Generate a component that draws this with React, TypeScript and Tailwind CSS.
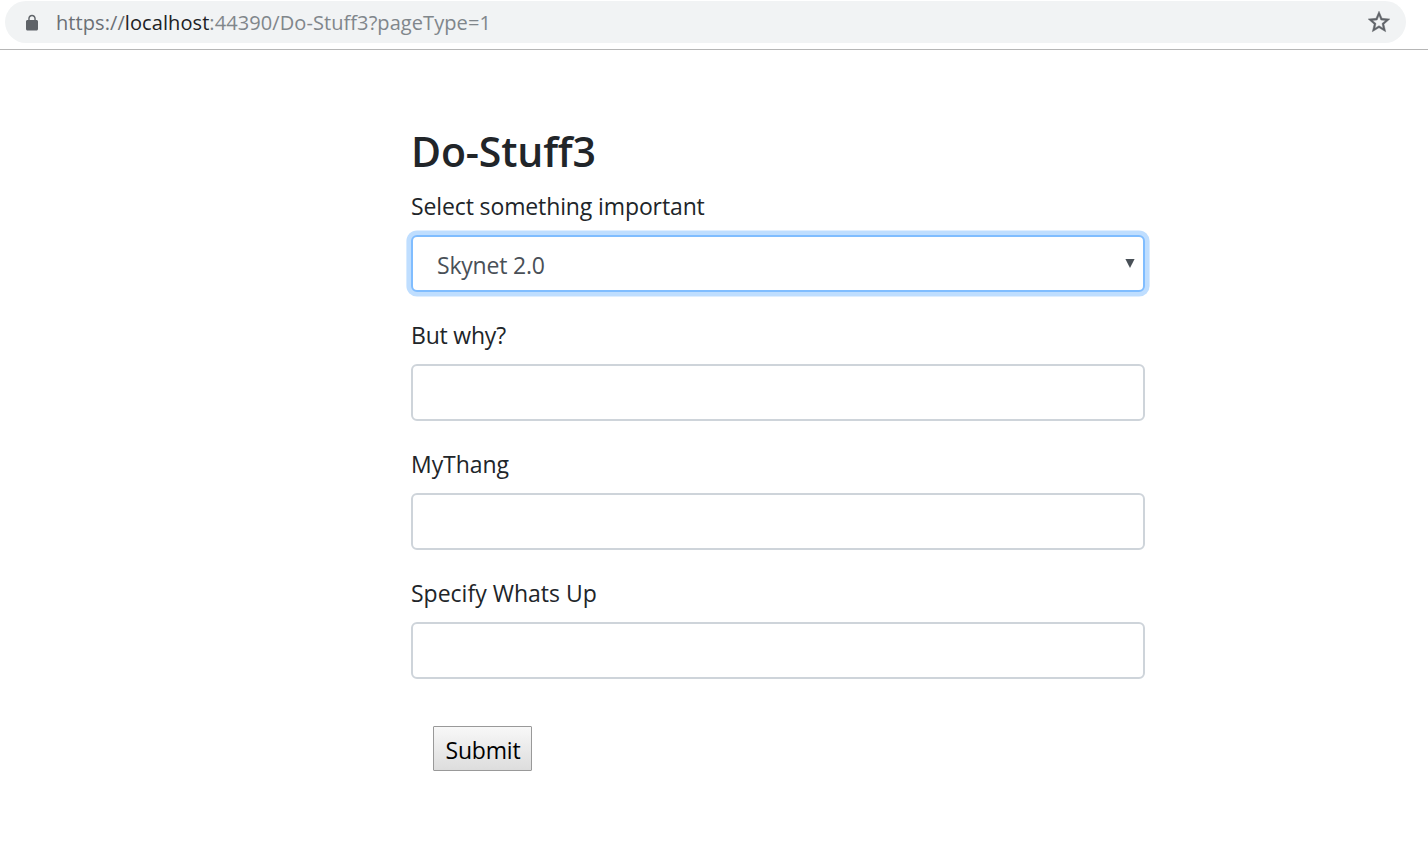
import React from "react";

type FieldProps = { label: string; tracking: string; children?: React.ReactNode };

function Field({ label, tracking, children }: FieldProps) {
  return (
    <label className="mb-7 block">
      <span className={`block h-[44px] text-[23px] leading-[31px] ${tracking}`}>{label}</span>
      {children ?? (
        <input className="block h-[57px] w-full rounded-[6px] border-2 border-[#ced4da] bg-white px-6 text-[23px] text-[#495057] outline-none" />
      )}
    </label>
  );
}

function LockIcon() {
  return (
    <svg width="18" height="18" viewBox="0 0 24 24" className="mt-px shrink-0" fill="#5f6368">
      <path d="M18 8h-1V6c0-2.76-2.24-5-5-5S7 3.24 7 6v2H6c-1.1 0-2 .9-2 2v10c0 1.1.9 2 2 2h12c1.1 0 2-.9 2-2V10c0-1.1-.9-2-2-2zM8.9 6c0-1.71 1.39-3.1 3.1-3.1s3.1 1.39 3.1 3.1v2H8.9V6z" />
    </svg>
  );
}

function StarIcon() {
  return (
    <svg width="26" height="26" viewBox="0 0 24 24" className="shrink-0" fill="#5f6368" stroke="#5f6368" strokeWidth="0.4">
      <path d="M22 9.24l-7.19-.62L12 2 9.19 8.63 2 9.24l5.46 4.73L5.82 21 12 17.27 18.18 21l-1.63-7.03L22 9.24zM12 15.4l-3.76 2.27 1-4.28-3.32-2.88 4.38-.38L12 6.1l1.71 4.04 4.38.38-3.32 2.88 1 4.28L12 15.4z" />
    </svg>
  );
}

export default function App() {
  return (
    <div className="min-h-[850px] bg-white font-['Open_Sans','Noto_Sans',sans-serif] text-[#212529]">
      <header className="flex h-[50px] items-start border-b border-[#b6b6b6] pl-[5px] pt-px">
        <div className="flex h-[42px] w-[1401px] items-center rounded-full bg-[#f1f3f4] pl-[18px] pr-[14px]">
          <LockIcon />
          <div className="ml-[15px] flex-1 pt-[2px] text-[20px] leading-[30px] tracking-[0.08px] text-[#80868b]">
            <span className="text-[#6b7075]">https://</span>
            <span className="text-[#202124]">localhost</span>
            <span>:44390/Do-Stuff3?pageType=1</span>
          </div>
          <StarIcon />
        </div>
      </header>
      <main className="ml-[411px] w-[734px] pt-[76px]">
        <h1 className="h-[65px] text-[41px] font-semibold leading-[51px] tracking-[-0.15px]">Do-Stuff3</h1>
        <Field label="Select something important" tracking="tracking-[-0.12px]">
          <span className="flex h-[57px] items-center justify-between rounded-[6px] border-2 border-[#80bdff] bg-white pl-[24px] pr-[8px] text-[23px] tracking-[-0.2px] text-[#495057] shadow-[0_0_0_4.6px_#bfdeff]">
            <span className="pt-[2px] leading-[30px]">Skynet 2.0</span>
            <svg width="10" height="9" viewBox="0 0 10 9" className="mb-px" fill="#495057">
              <path d="M.4 0h9.2L5 9z" />
            </svg>
          </span>
        </Field>
        <Field label="But why?" tracking="tracking-[-0.2px]" />
        <Field label="MyThang" tracking="tracking-[-0.05px]" />
        <Field label="Specify Whats Up" tracking="tracking-[0px]" />
        <button className="ml-[22px] mt-[47px] flex h-[45px] w-[99px] items-center justify-center rounded-[1px] border border-[#999] bg-linear-to-b from-[#f8f8f8] to-[#dddddd] pl-px pt-[2px] text-[23px] leading-[30px] tracking-[-0.2px] text-black">
          Submit
        </button>
      </main>
    </div>
  );
}
